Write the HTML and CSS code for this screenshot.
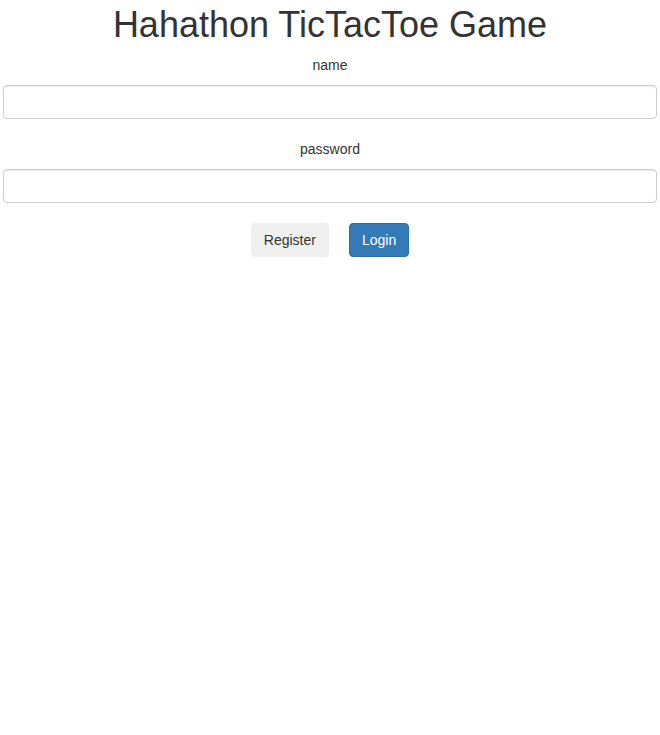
FILE: index.html
```
<!DOCTYPE html>
<html lang="en">
<head>
  <meta charset="UTF-8">
  <meta name="viewport" content="width=device-width, initial-scale=1.0">
  <title>Hahathon TicTacToe Game</title>
  <link rel="stylesheet" href="styles.css">
</head>
<body>
  <div class="login-box">
    <h1 class="game-title">Hahathon TicTacToe Game</h1>
    <form class="login-form" onsubmit="return false">
      <div class="form-group">
        <label for="userName">name</label>
        <input type="text" id="userName" class="form-control">
      </div>
      <div class="form-group">
        <label for="userPass">password</label>
        <input type="password" id="userPass" class="form-control">
      </div>
      <div class="btn-row">
        <button type="button" class="btn btn-plain">Register</button>
        <button type="submit" class="btn btn-blue">Login</button>
      </div>
    </form>
  </div>
</body>
</html>
```

FILE: styles.css
```
body {
  font-family: 'Liberation Sans', Arial, sans-serif;
  font-size: 14px;
  line-height: 20px;
  color: #333;
  margin: 0;
  background: white;
}

.login-box {
  padding: 0 3px;
}

.game-title {
  font-size: 36px;
  font-weight: normal;
  line-height: 40px;
  text-align: center;
  margin: 5px 0 10px;
}

.form-group {
  margin-bottom: 20px;
}

.form-group label {
  display: block;
  text-align: center;
  margin-bottom: 10px;
}

.form-control {
  display: block;
  width: 100%;
  height: 34px;
  box-sizing: border-box;
  padding: 6px 12px;
  font-family: inherit;
  font-size: 14px;
  color: #555;
  background: #fff;
  border: 1px solid #ccc;
  border-radius: 4px;
  box-shadow: inset 0 1px 1px rgba(0,0,0,0.075);
  margin: 0;
}

.btn-row {
  display: flex;
  justify-content: center;
  gap: 20px;
}

.btn {
  font-family: inherit;
  font-size: 14px;
  line-height: 20px;
  padding: 6px 12px;
  border: 1px solid transparent;
  border-radius: 4px;
  cursor: pointer;
  margin: 0;
}

.btn-plain {
  background: #efefef;
  border-color: #efefef;
  color: #333;
}

.btn-blue {
  background: #337ab7;
  border-color: #2e6da4;
  color: #fff;
}
```
